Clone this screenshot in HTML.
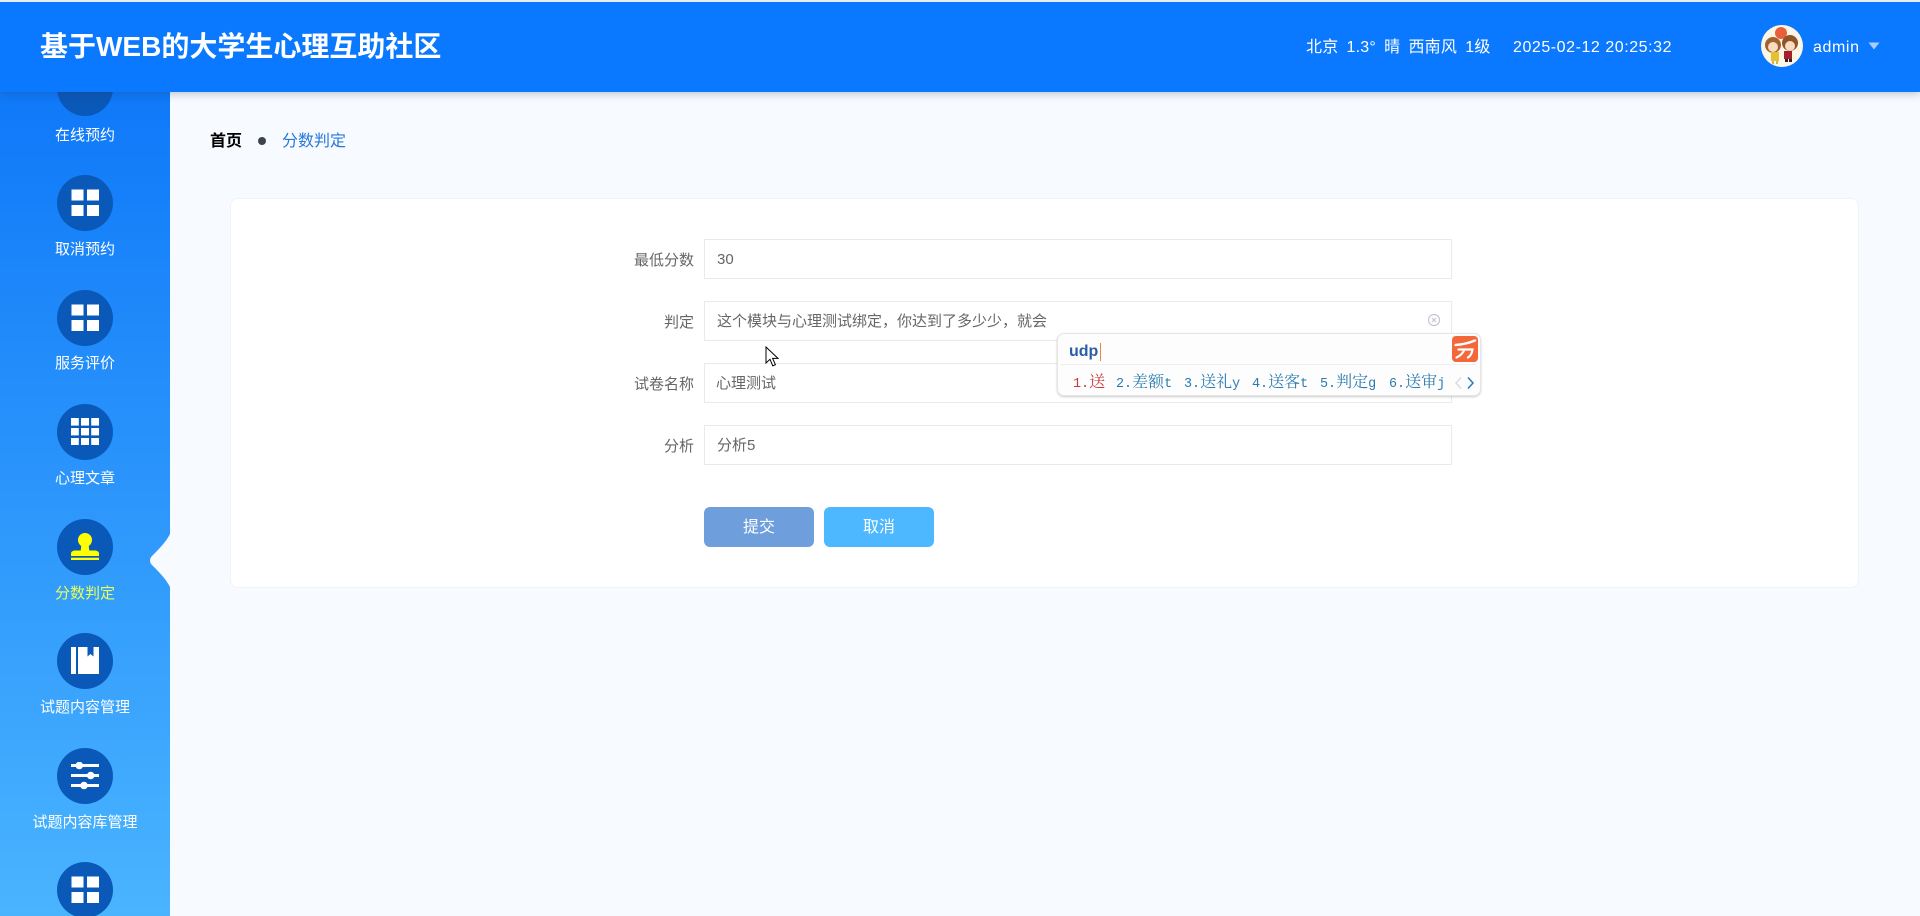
<!DOCTYPE html>
<html lang="zh-CN">
<head>
<meta charset="utf-8">
<title>基于WEB的大学生心理互助社区</title>
<style>
*{box-sizing:border-box}
html,body{margin:0;padding:0;width:1920px;height:916px;overflow:hidden;background:#f7faff;font-family:"Liberation Sans","Noto Sans CJK SC",sans-serif}
.t{position:absolute;white-space:nowrap;line-height:1}
#top{position:absolute;left:0;top:0;width:1920px;height:2px;background:#e6edf5;z-index:6}
#hd{position:absolute;left:0;top:2px;width:1920px;height:90px;background:#0a78ff;box-shadow:0 2px 8px rgba(40,60,100,.28);z-index:5}
#side{position:absolute;left:0;top:0;width:170px;height:916px;background:linear-gradient(180deg,#0872f8 0%,#4ab4ff 100%);overflow:hidden}
.c{position:absolute;left:57px;width:56px;height:56px;border-radius:50%;background:#0a58b8}
.l{position:absolute;left:0;width:170px;text-align:center;color:#fff;font-size:15px;line-height:20px;white-space:nowrap}
.inp{position:absolute;left:704px;width:748px;height:40px;background:#fff;border:1px solid #e8eaee}
.lab{position:absolute;right:1226px;font-size:15px;color:#666;line-height:20px;white-space:nowrap}
.val{position:absolute;font-size:15px;color:#666;line-height:20px;white-space:nowrap}
.btn{position:absolute;top:507px;width:110px;height:40px;border-radius:6px;color:#fff;font-size:16px;line-height:42px;text-align:center}
.cand{position:absolute;top:372px;font-family:"Liberation Mono","Noto Serif CJK SC",serif;font-size:13.4px;line-height:18px;color:#2b7bb0;white-space:nowrap}
.cand b{font-family:"Noto Serif CJK SC",serif;font-size:16px;font-weight:400}
</style>
</head>
<body>
<div id="side">
  <div class="c" style="top:60px"></div>
  <div class="l" style="top:126px">在线预约</div>

  <div class="c" style="top:175px"></div>
  <svg style="position:absolute;left:71px;top:189px" width="28" height="28"><g fill="#fff"><rect x="0.5" y="0.5" width="12" height="11"/><rect x="16" y="0.5" width="12" height="11"/><rect x="0.5" y="16" width="12" height="11"/><rect x="16" y="16" width="12" height="11"/></g></svg>
  <div class="l" style="top:240px">取消预约</div>

  <div class="c" style="top:290px"></div>
  <svg style="position:absolute;left:71px;top:304px" width="28" height="28"><g fill="#fff"><rect x="0.5" y="0.5" width="12" height="11"/><rect x="16" y="0.5" width="12" height="11"/><rect x="0.5" y="16" width="12" height="11"/><rect x="16" y="16" width="12" height="11"/></g></svg>
  <div class="l" style="top:354px">服务评价</div>

  <div class="c" style="top:404px"></div>
  <svg style="position:absolute;left:71px;top:418px" width="28" height="28"><g fill="#fff"><rect x="0" y="0" width="7.8" height="7.6"/><rect x="10" y="0" width="8" height="7.6"/><rect x="20.2" y="0" width="7.8" height="7.6"/><rect x="0" y="10" width="7.8" height="7.4"/><rect x="10" y="10" width="8" height="7.4"/><rect x="20.2" y="10" width="7.8" height="7.4"/><rect x="0" y="20" width="7.8" height="7"/><rect x="10" y="20" width="8" height="7"/><rect x="20.2" y="20" width="7.8" height="7"/></g></svg>
  <div class="l" style="top:469px">心理文章</div>

  <div class="c" style="top:519px"></div>
  <svg style="position:absolute;left:71px;top:533px" width="28" height="28"><g fill="#ffff00"><circle cx="14" cy="7" r="7"/><path d="M10.5 11h7l.8 6.500h5.700c2 0 4 1.200 4 3v2.500H0v-2.500c0-1.800 2-3 4-3h5.700z"/><rect x="0" y="24.700" width="28" height="2.300"/></g></svg>
  <div class="l" style="top:584px;color:#e8ff55">分数判定</div>

  <div class="c" style="top:633px"></div>
  <svg style="position:absolute;left:71px;top:647px" width="28" height="28"><g fill="#fff"><rect x="0" y="0" width="5" height="27"/><path d="M7 0h9.500v9.500l3-2.500 3 2.500V0H28v27H7z"/></g></svg>
  <div class="l" style="top:698px">试题内容管理</div>

  <div class="c" style="top:748px"></div>
  <svg style="position:absolute;left:71px;top:762px" width="28" height="28"><g fill="#fff"><rect x="0" y="2" width="28" height="3"/><circle cx="8.300" cy="3.500" r="3.800"/><rect x="0" y="12" width="28" height="3"/><circle cx="19.700" cy="13.500" r="3.800"/><rect x="0" y="22" width="28" height="3"/><circle cx="13" cy="23.500" r="3.800"/></g></svg>
  <div class="l" style="top:813px">试题内容库管理</div>

  <div class="c" style="top:862px"></div>
  <svg style="position:absolute;left:71px;top:876px" width="28" height="28"><g fill="#fff"><rect x="0.5" y="0.5" width="12" height="11"/><rect x="16" y="0.500" width="12" height="11"/><rect x="0.5" y="16" width="12" height="11"/><rect x="16" y="16" width="12" height="11"/></g></svg>
</div>

<svg style="position:absolute;left:148px;top:534px;z-index:2" width="22" height="53"><path d="M22 0 C18 8 10 16 5 21 C1 24 1 29 5 32 C10 37 18 45 22 53Z" fill="#f7faff"/></svg>

<div id="top"></div>
<div id="hd">
  <div class="t" style="left:40px;top:31px;font-size:28px;font-weight:700;color:#fff">基于WEB的大学生心理互助社区</div>
  <div class="t" style="left:1306px;top:38px;font-size:16px;color:#fff;letter-spacing:.2px;word-spacing:3.500px">北京 1.3° 晴 西南风 1级</div>
  <div class="t" style="left:1513px;top:38px;font-size:16px;color:#fff;letter-spacing:.55px">2025-02-12 20:25:32</div>
  <svg style="position:absolute;left:1761px;top:23px" width="42" height="42" viewBox="0 0 42 42">
    <defs><clipPath id="av"><circle cx="21" cy="21" r="21"/></clipPath></defs>
    <g clip-path="url(#av)">
      <rect width="42" height="42" fill="#fdf6e6"/>
      <circle cx="20" cy="8" r="6" fill="#e8603a"/>
      <circle cx="12" cy="20" r="8" fill="#a0622e"/>
      <circle cx="29" cy="18" r="8" fill="#8f5428"/>
      <circle cx="12" cy="22" r="5" fill="#f9dcc0"/>
      <circle cx="29" cy="21" r="5" fill="#f9dcc0"/>
      <rect x="10" y="27" width="8" height="9" fill="#e2c233"/>
      <rect x="23" y="26" width="8" height="8" fill="#a81e2e"/>
      <rect x="11" y="36" width="2" height="3" fill="#d8b04a"/>
      <rect x="15" y="36" width="2" height="3" fill="#d8b04a"/>
      <rect x="24" y="34" width="3" height="3" fill="#3a2020"/>
      <rect x="28" y="34" width="3" height="3" fill="#3a2020"/>
    </g>
  </svg>
  <div class="t" style="left:1813px;top:38px;font-size:16px;color:#fff;letter-spacing:.6px">admin</div>
  <svg style="position:absolute;left:1868px;top:40px" width="12" height="8"><path d="M0.500 0.500h11L6 7.500z" fill="#a8cdfb"/></svg>
</div>

<div class="t" style="left:210px;top:134px;font-size:16px;font-weight:700;color:#000">首页</div>
<div style="position:absolute;left:258px;top:137px;width:8px;height:8px;border-radius:50%;background:#3d4350"></div>
<div class="t" style="left:282px;top:134px;font-size:16px;color:#2878d8">分数判定</div>

<div style="position:absolute;left:230px;top:198px;width:1629px;height:390px;background:#fff;border:1px solid #f0f3f8;border-radius:8px"></div>

<div class="lab" style="top:251px">最低分数</div>
<div class="inp" style="top:239px"></div>
<div class="val" style="left:717px;top:250px">30</div>

<div class="lab" style="top:313px">判定</div>
<div class="inp" style="top:301px"></div>
<div class="val" style="left:717px;top:312px">这个模块与心理测试绑定，你达到了多少少，就会</div>
<svg style="position:absolute;left:1427px;top:313px" width="14" height="14" viewBox="0 0 14 14"><circle cx="7" cy="7" r="5.500" fill="none" stroke="#c4c8d0" stroke-width="1.200"/><path d="M5 5l4 4M9 5l-4 4" stroke="#c4c8d0" stroke-width="1.200"/></svg>

<div class="lab" style="top:375px">试卷名称</div>
<div class="inp" style="top:363px"></div>
<div class="val" style="left:716px;top:374px">心理测试</div>

<div class="lab" style="top:437px">分析</div>
<div class="inp" style="top:425px"></div>
<div class="val" style="left:717px;top:436px">分析5</div>

<div class="btn" style="left:704px;background:#6e9fdc">提交</div>
<div class="btn" style="left:824px;background:#4db8ff">取消</div>

<svg style="position:absolute;left:765px;top:346px;z-index:9" width="15" height="22" viewBox="0 0 15 22"><path d="M1 1v16l4-3.700 2.800 6.500 2.600-1.100-2.800-6.300h5.400z" fill="#fff" stroke="#000" stroke-width="1"/></svg>

<div style="position:absolute;left:1057px;top:333px;width:424px;height:63px;background:#fdfdfd;border:1px solid #e6e6e6;border-radius:7px;box-shadow:0 1px 2px rgba(0,0,0,.2);z-index:8"></div>
<div style="position:absolute;left:1060px;top:364px;width:416px;height:1px;background:#efefef;z-index:8"></div>
<div class="t" style="left:1069px;top:344px;font-size:16px;font-weight:700;color:#2a5ca8;z-index:9">udp</div>
<div style="position:absolute;left:1100px;top:343px;width:1px;height:18px;background:#e08a40;z-index:9"></div>
<svg style="position:absolute;left:1452px;top:336px;z-index:9" width="26" height="26" viewBox="0 0 26 26"><rect width="26" height="26" rx="4" fill="#f4673a"/><path d="M3.500 9C10 8.500 17 7 23 4.500" fill="none" stroke="#fff" stroke-width="2.400" stroke-linecap="round"/><path d="M6.500 13.500H20.500C20 17 18.500 20 16 21.500M12.500 13.500C11 17 8 20 4.500 21.500" fill="none" stroke="#fff" stroke-width="2.200" stroke-linecap="round"/></svg>
<div style="z-index:9;position:absolute;left:0;top:0">
  <div class="cand" style="left:1073px;color:#c8383c">1.<b>送</b></div>
  <div class="cand" style="left:1116px">2.<b>差额</b>t</div>
  <div class="cand" style="left:1184px">3.<b>送礼</b>y</div>
  <div class="cand" style="left:1252px">4.<b>送客</b>t</div>
  <div class="cand" style="left:1320px">5.<b>判定</b>g</div>
  <div class="cand" style="left:1389px">6.<b>送审</b>j</div>
  <svg style="position:absolute;left:1455px;top:376px" width="20" height="14"><path d="M6 1.500L1 7l5 5.500" fill="none" stroke="#d8dde2" stroke-width="1.500"/><path d="M13 1.500L18 7l-5 5.500" fill="none" stroke="#2b7bb0" stroke-width="1.500"/></svg>
</div>
</body>
</html>
